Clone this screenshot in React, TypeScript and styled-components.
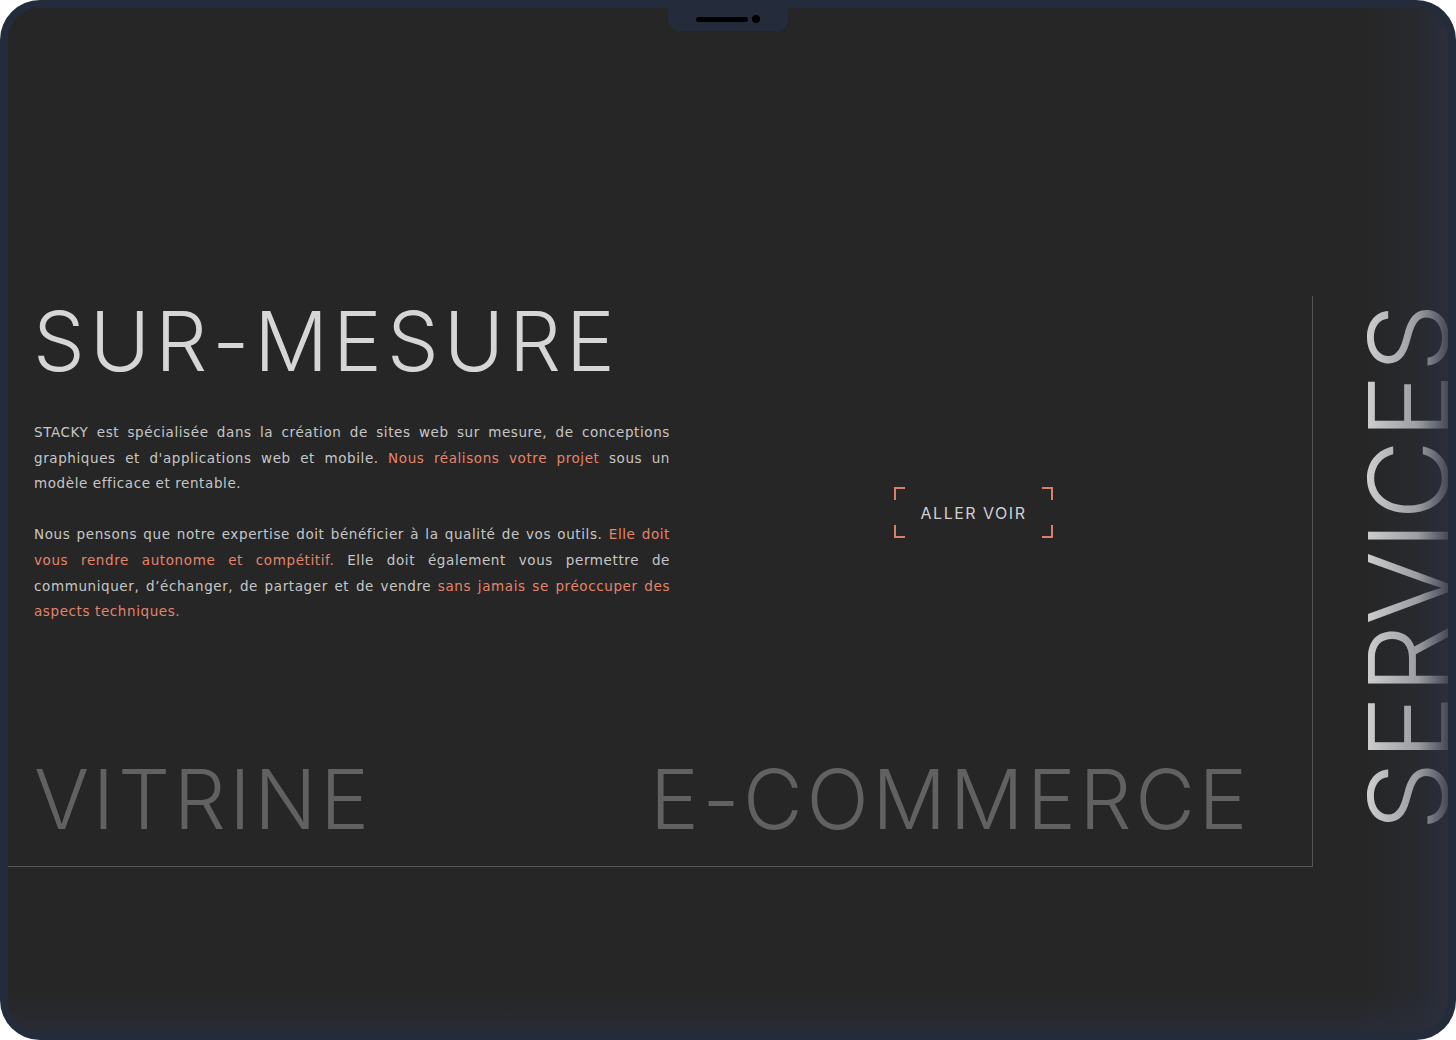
import React from 'react';
import styled, { createGlobalStyle } from 'styled-components';

const GlobalStyle = createGlobalStyle`
  html, body {
    margin: 0;
    padding: 0;
    background: #ffffff;
  }
  body {
    font-family: 'Liberation Sans', Arial, sans-serif;
  }
`;

function App() {
  return (
    <>
      <GlobalStyle />
      <Device>
        <Notch>
          <Speaker />
          <Camera />
        </Notch>
        <Screen>
          <Showcase>
            <TopRow>
              <Intro>
                <Title>SUR-MESURE</Title>
                <Paragraph>
                  <Line>STACKY est spécialisée dans la création de sites web sur mesure, de conceptions</Line>
                  <Line>
                    graphiques et d'applications web et mobile. <Accent>Nous réalisons votre projet</Accent> sous un
                  </Line>
                  <Line $last>modèle efficace et rentable.</Line>
                </Paragraph>
                <Paragraph>
                  <Line>
                    Nous pensons que notre expertise doit bénéficier à la qualité de vos outils.{' '}
                    <Accent>Elle doit</Accent>
                  </Line>
                  <Line>
                    <Accent>vous rendre autonome et compétitif.</Accent> Elle doit également vous permettre de
                  </Line>
                  <Line>
                    communiquer, d’échanger, de partager et de vendre <Accent>sans jamais se préoccuper des</Accent>
                  </Line>
                  <Line $last>
                    <Accent>aspects techniques.</Accent>
                  </Line>
                </Paragraph>
              </Intro>
              <ButtonArea>
                <SeeButton>
                  <Corner $v="top" $h="left" />
                  <Corner $v="top" $h="right" />
                  <Corner $v="bottom" $h="left" />
                  <Corner $v="bottom" $h="right" />
                  ALLER VOIR
                </SeeButton>
              </ButtonArea>
            </TopRow>
            <BottomRow>
              <Category>VITRINE</Category>
              <Category>E-COMMERCE</Category>
            </BottomRow>
          </Showcase>
          <SideColumn>
            <SideTitle>SERVICES</SideTitle>
          </SideColumn>
        </Screen>
      </Device>
    </>
  );
}

const Device = styled.div`
  position: relative;
  width: 1456px;
  height: 1040px;
  box-sizing: border-box;
  padding: 8px;
  border-radius: 40px;
  background: #242b3a;
  overflow: hidden;
`;
const Notch = styled.div`
  position: absolute;
  top: 0;
  left: 668px;
  width: 120px;
  height: 31px;
  background: #242b3a;
  border-radius: 0 0 12px 12px;
  display: flex;
  align-items: center;
  justify-content: center;
  gap: 4px;
  padding-top: 7px;
  box-sizing: border-box;
  z-index: 2;
`;
const Speaker = styled.div`
  width: 52px;
  height: 5px;
  border-radius: 3px;
  background: #000;
`;
const Camera = styled.div`
  width: 8px;
  height: 8px;
  border-radius: 50%;
  background: #000;
`;
const Screen = styled.div`
  position: relative;
  width: 100%;
  height: 100%;
  border-radius: 32px;
  background: #262626;
  display: flex;
  align-items: flex-start;
  overflow: hidden;
  &::after {
    content: '';
    position: absolute;
    inset: 0;
    pointer-events: none;
    background: linear-gradient(
        to right,
        rgba(42, 48, 64, 0) calc(100% - 90px),
        rgba(42, 48, 64, 0.35) calc(100% - 30px),
        rgba(42, 48, 64, 0.85) 100%
      ),
      linear-gradient(to bottom, rgba(42, 48, 64, 0) calc(100% - 40px), rgba(42, 48, 64, 0.6) 100%);
  }
`;
const Showcase = styled.div`
  flex-shrink: 0;
  margin-top: 288px;
  width: 1305px;
  height: 571px;
  box-sizing: border-box;
  border-right: 1px solid #545454;
  border-bottom: 1px solid #545454;
  padding: 0 0 0 26px;
  display: flex;
  flex-direction: column;
  justify-content: space-between;
`;
const TopRow = styled.div`
  display: grid;
  grid-template-columns: 636px 1fr;
`;
const Intro = styled.div`
  display: flex;
  flex-direction: column;
`;
const Title = styled.h1`
  margin: 0 0 37px -1px;
  padding-top: 5px;
  font-family: Inter, 'Liberation Sans', sans-serif;
  font-weight: 300;
  font-size: 82px;
  line-height: 1;
  letter-spacing: 5px;
  color: #d6d6d6;
  white-space: nowrap;
`;
const Paragraph = styled.p`
  margin: 0 0 25.6px 0;
  font-family: 'DejaVu Sans', 'Liberation Sans', sans-serif;
  font-size: 13.5px;
  line-height: 25.6px;
  letter-spacing: 0.6px;
  color: #c6c6c6;
`;
const Line = styled.span<{ $last?: boolean }>`
  display: block;
  text-align: justify;
  text-align-last: ${(p) => (p.$last ? 'left' : 'justify')};
`;
const Accent = styled.span`
  color: #e4846c;
`;
const ButtonArea = styled.div`
  display: flex;
  align-items: flex-start;
  justify-content: flex-start;
  padding-left: 224px;
`;
const SeeButton = styled.div`
  position: relative;
  width: 159px;
  height: 51px;
  margin-top: 191px;
  display: flex;
  align-items: center;
  justify-content: center;
  font-family: Inter, 'Liberation Sans', sans-serif;
  font-size: 16px;
  letter-spacing: 1.5px;
  color: #d0d0d0;
`;
const Corner = styled.span<{ $v: 'top' | 'bottom'; $h: 'left' | 'right' }>`
  position: absolute;
  width: 9px;
  height: 11px;
  ${(p) => p.$v}: 0;
  ${(p) => p.$h}: 0;
  border-color: #d98068;
  border-style: solid;
  border-width: 0;
  ${(p) => `border-${p.$v}-width: 2px; border-${p.$h}-width: 2px;`}
`;
const BottomRow = styled.div`
  display: grid;
  grid-template-columns: 616px auto;
  padding-bottom: 25px;
`;
const Category = styled.div`
  font-family: Inter, 'Liberation Sans', sans-serif;
  font-weight: 300;
  font-size: 82px;
  line-height: 1;
  letter-spacing: 3.6px;
  color: #616161;
  white-space: nowrap;
`;
const SideColumn = styled.div`
  flex: 1;
  min-width: 0;
  align-self: stretch;
  display: flex;
  align-items: center;
  justify-content: flex-start;
  padding-left: 40px;
  padding-top: 92px;
`;
const SideTitle = styled.div`
  writing-mode: vertical-rl;
  transform: rotate(180deg);
  font-family: Inter, 'Liberation Sans', sans-serif;
  font-weight: 300;
  font-size: 110px;
  line-height: 1;
  letter-spacing: 1px;
  color: #d6d6d6;
`;

export default App;
